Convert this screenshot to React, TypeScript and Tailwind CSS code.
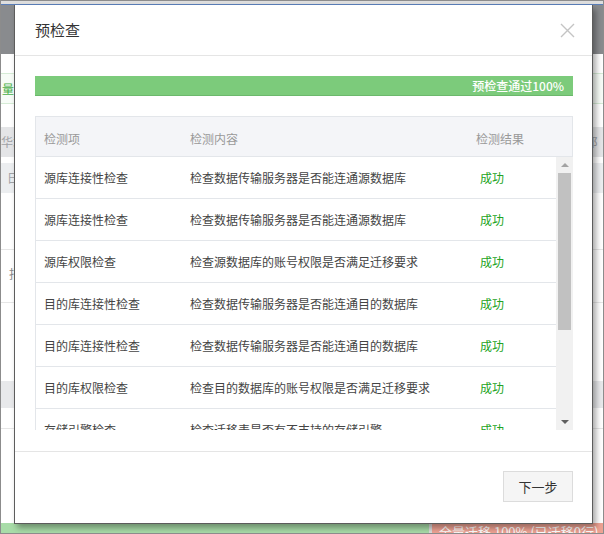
import React from 'react';

const font = { fontFamily: '"Noto Sans CJK SC", "Noto Sans", sans-serif' };

type Check = { item: string; content: string; result: string };

const checks: Check[] = [
  { item: '源库连接性检查', content: '检查数据传输服务器是否能连通源数据库', result: '成功' },
  { item: '源库连接性检查', content: '检查数据传输服务器是否能连通源数据库', result: '成功' },
  { item: '源库权限检查', content: '检查源数据库的账号权限是否满足迁移要求', result: '成功' },
  { item: '目的库连接性检查', content: '检查数据传输服务器是否能连通目的数据库', result: '成功' },
  { item: '目的库连接性检查', content: '检查数据传输服务器是否能连通目的数据库', result: '成功' },
  { item: '目的库权限检查', content: '检查目的数据库的账号权限是否满足迁移要求', result: '成功' },
  { item: '存储引擎检查', content: '检查迁移表是否有不支持的存储引擎', result: '成功' },
  { item: '字符集检查', content: '检查源库和目的库的字符集是否一致', result: '成功' },
];

// the page behind the dialog, only its edges show
const BackgroundPage = () => (
  <div className="flex h-full flex-col text-[12px] [&>*]:shrink-0">
    <div className="h-[3px] bg-[#dedede]" />
    <div className="h-px bg-[#5b7fba]" />
    <div className="h-[49px] bg-[#898b8e]" />
    <div className="h-[19px]" />
    <div className="flex h-[31px] items-center border-y border-[#d6ecd6] bg-[#f7fcf7] pl-[1px] text-[#48b048]">量类</div>
    <div className="h-[23px]" />
    <div className="flex h-[30px] items-center justify-between bg-[#e4e5e7] text-[#a0a2a6]">
      <span>华才</span>
      <span>阝</span>
    </div>
    <div className="h-[6px]" />
    <div className="flex h-[30px] items-center bg-[#eceef0] pl-[6px] text-[#a0a2a6]">日</div>
    <div className="h-[56px]" />
    <div className="h-px bg-[#e6e6e6]" />
    <div className="flex h-[33px] items-end pl-[8px] text-[#888]">指</div>
    <div className="h-[20px] border-b border-[#e6e6e6]" />
    <div className="h-[78px]" />
    <div className="h-[27px] bg-[#e8e9eb]" />
    <div className="h-[21px] border-b border-[#e6e6e6]" />
    <div className="!shrink flex-1" />
    <div className="flex h-[10px] overflow-hidden">
      <div className="w-[428px] bg-[#a8dca8]" />
      <div className="w-[3px] bg-[#dcdcdc]" />
      <div className="flex-1 bg-[#eea293] pl-[7px] text-[13px] leading-[18px] text-white">全量迁移 100% (已迁移0行)</div>
    </div>
  </div>
);

const CloseIcon = () => (
  <svg width="15" height="15" viewBox="0 0 15 15" fill="none">
    <path d="M1 1L14 14M14 1L1 14" stroke="#c4c4c4" strokeWidth="1.4" />
  </svg>
);

const ScrollBar = () => (
  <div className="flex w-[17px] flex-col bg-[#f1f1f1]">
    <div className="flex h-[16px] items-center justify-center">
      <div className="h-0 w-0 border-x-[4px] border-b-[4px] border-x-transparent border-b-[#a3a3a3]" />
    </div>
    <div className="mx-[2px] h-[157px] bg-[#c1c1c1]" />
    <div className="flex-1" />
    <div className="flex h-[17px] items-center justify-center">
      <div className="h-0 w-0 border-x-[4px] border-t-[4px] border-x-transparent border-t-[#5f5f5f]" />
    </div>
  </div>
);

const PrecheckDialog = () => (
  <div className="absolute left-[13px] top-[4px] flex h-[519px] w-[579px] flex-col border-x border-b border-[#5c5c5c] bg-white shadow-[3px_4px_6px_rgba(0,0,0,0.35)]">
    <div className="flex h-[51px] shrink-0 items-center justify-between border-b border-[#e5e5e5] pl-[20px] pr-[17px]">
      <span className="text-[15px] text-[#333]">预检查</span>
      <CloseIcon />
    </div>

    <div className="shrink-0 pb-[21px] pl-[20px] pr-[19px] pt-[20px]">
      <div className="flex h-[20px] items-center justify-end border-b border-[#6cb86c] bg-[#7ccb7b] pr-[9px] text-[12px] font-medium text-white">
        预检查通过100%
      </div>

      <div className="mt-[20px] text-[12px]">
        <div className="flex h-[41px] items-center border border-[#e3e6ea] bg-[#f4f5f8] pt-[5px] text-[#999]">
          <div className="w-[146px] pl-[8px]">检测项</div>
          <div className="w-[286px] pl-[8px]">检测内容</div>
          <div className="pl-[8px]">检测结果</div>
        </div>
        <div className="flex h-[273px] border-l border-[#e3e6ea]">
          <div className="flex-1 overflow-hidden">
            {checks.map((c, i) => (
              <div key={i} className="flex h-[42px] shrink-0 items-center border-b border-[#e3e6ea] text-[#444]">
                <div className="w-[146px] pl-[8px]">{c.item}</div>
                <div className="w-[290px] pl-[8px]">{c.content}</div>
                <div className="pl-[8px] text-[#22a322]">{c.result}</div>
              </div>
            ))}
          </div>
          <ScrollBar />
        </div>
      </div>
    </div>

    <div className="flex flex-1 items-start justify-end border-t border-[#e5e5e5] pr-[19px] pt-[19px]">
      <button className="h-[31px] w-[70px] border border-[#dcdcdc] bg-[#f5f5f5] text-[13px] text-[#333]">下一步</button>
    </div>
  </div>
);

export default function App() {
  return (
    <div style={font} className="relative h-[534px] w-[604px] overflow-hidden border border-[#8c8c8c] bg-white">
      <BackgroundPage />
      <PrecheckDialog />
    </div>
  );
}
